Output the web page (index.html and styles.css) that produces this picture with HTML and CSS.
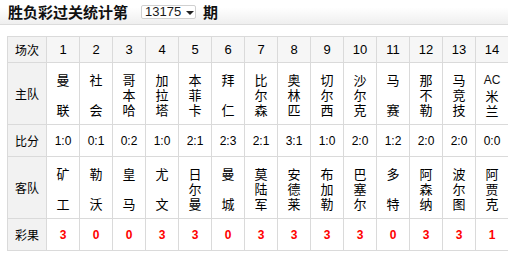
FILE: index.html
```html
<!DOCTYPE html>
<html>
<head>
<meta charset="utf-8">
<link rel="stylesheet" href="styles.css">
</head>
<body>
<div class="topbar">
  <span class="title">胜负彩过关统计第</span>
  <span class="select"><span class="sel-val">13175</span><span class="caret"></span></span>
  <span class="title">期</span>
</div>
<table class="stats">
  <colgroup>
    <col class="c-label"><col span="14" class="c-num">
  </colgroup>
  <tr class="r-head">
    <th class="lbl">场次</th>
    <th>1</th><th>2</th><th>3</th><th>4</th><th>5</th><th>6</th><th>7</th><th>8</th><th>9</th><th>10</th><th>11</th><th>12</th><th>13</th><th>14</th>
  </tr>
  <tr class="r-team">
    <td class="lbl">主队</td>
    <td><div class="team">曼<br><br>联</div></td>
    <td><div class="team">社<br><br>会</div></td>
    <td><div class="team">哥<br>本<br>哈</div></td>
    <td><div class="team">加<br>拉<br>塔</div></td>
    <td><div class="team">本<br>菲<br>卡</div></td>
    <td><div class="team">拜<br><br>仁</div></td>
    <td><div class="team">比<br>尔<br>森</div></td>
    <td><div class="team">奥<br>林<br>匹</div></td>
    <td><div class="team">切<br>尔<br>西</div></td>
    <td><div class="team">沙<br>尔<br>克</div></td>
    <td><div class="team">马<br><br>赛</div></td>
    <td><div class="team">那<br>不<br>勒</div></td>
    <td><div class="team">马<br>竞<br>技</div></td>
    <td><div class="team"><span class="lat">AC</span><br>米<br>兰</div></td>
  </tr>
  <tr class="r-score">
    <td class="lbl">比分</td>
    <td>1:0</td><td>0:1</td><td>0:2</td><td>1:0</td><td>2:1</td><td>2:3</td><td>2:1</td><td>3:1</td><td>1:0</td><td>2:0</td><td>1:2</td><td>2:0</td><td>2:0</td><td>0:0</td>
  </tr>
  <tr class="r-team">
    <td class="lbl">客队</td>
    <td><div class="team">矿<br><br>工</div></td>
    <td><div class="team">勒<br><br>沃</div></td>
    <td><div class="team">皇<br><br>马</div></td>
    <td><div class="team">尤<br><br>文</div></td>
    <td><div class="team">日<br>尔<br>曼</div></td>
    <td><div class="team">曼<br><br>城</div></td>
    <td><div class="team">莫<br>陆<br>军</div></td>
    <td><div class="team">安<br>德<br>莱</div></td>
    <td><div class="team">布<br>加<br>勒</div></td>
    <td><div class="team">巴<br>塞<br>尔</div></td>
    <td><div class="team">多<br><br>特</div></td>
    <td><div class="team">阿<br>森<br>纳</div></td>
    <td><div class="team">波<br>尔<br>图</div></td>
    <td><div class="team">阿<br>贾<br>克</div></td>
  </tr>
  <tr class="r-result">
    <td class="lbl">彩果</td>
    <td class="res">3</td><td class="res">0</td><td class="res">0</td><td class="res">3</td><td class="res">3</td><td class="res">0</td><td class="res">3</td><td class="res">3</td><td class="res">3</td><td class="res">3</td><td class="res">0</td><td class="res">3</td><td class="res">3</td><td class="res">1</td>
  </tr>
</table>
</body>
</html>
```
FILE: styles.css
```css
html, body {
  margin: 0;
  padding: 0;
  background: #fff;
}
body {
  font-family: "Liberation Sans", Arial, "Noto Sans CJK SC", sans-serif;
  color: #000;
}
.topbar {
  height: 24px;
  border-bottom: 1px solid #dcdcdc;
  background: linear-gradient(#ffffff 0%, #ffffff 30%, #efefef 100%);
  display: flex;
  align-items: center;
  padding-left: 8px;
}
.title {
  font-family: "Noto Sans CJK SC", sans-serif;
  font-weight: bold;
  font-size: 15px;
  line-height: 16px;
  color: #111;
}
.select {
  margin-left: 13px;
  margin-right: 7px;
  width: 55px;
  height: 14px;
  box-sizing: border-box;
  border: 1px solid #d0d0d0;
  border-radius: 2px;
  background: #fff;
  display: flex;
  align-items: center;
  padding-left: 3px;
  font-family: "Liberation Sans", Arial, sans-serif;
  font-size: 13px;
  color: #1a1a1a;
}
.sel-val {
  line-height: 12px;
}
.caret {
  margin-left: 5px;
  width: 0;
  height: 0;
  border-left: 4px solid transparent;
  border-right: 4px solid transparent;
  border-top: 4px solid #222;
  margin-top: 1px;
}
.stats {
  margin: 11px 0 0 7px;
  border-collapse: collapse;
  table-layout: fixed;
  width: 501px;
}
.c-label { width: 39px; }
.c-num { width: 33px; }
.stats th, .stats td {
  border: 1px solid #dadada;
  padding: 0;
  text-align: center;
  vertical-align: middle;
  font-weight: normal;
}
.stats .lbl {
  background: #f2f2f2;
  font-family: "Noto Sans CJK SC", sans-serif;
  font-size: 12px;
}
.r-head th {
  height: 25px;
  background: #f6f6f6;
  font-size: 13px;
}
.r-head th.lbl { background: #f2f2f2; }
.r-team td {
  height: 61px;
}
.r-score td {
  height: 31px;
  font-size: 12px;
}
.r-result td {
  height: 31px;
}
.team {
  margin-top: 2px;
  font-family: "Noto Sans CJK SC", sans-serif;
  font-size: 13px;
  line-height: 15px;
}
.team .lat {
  font-family: "Liberation Sans", Arial, sans-serif;
  font-size: 12px;
  color: #111;
}
.stats td.res {
  color: #ff0000;
  font-weight: bold;
  font-size: 12px;
}
```
